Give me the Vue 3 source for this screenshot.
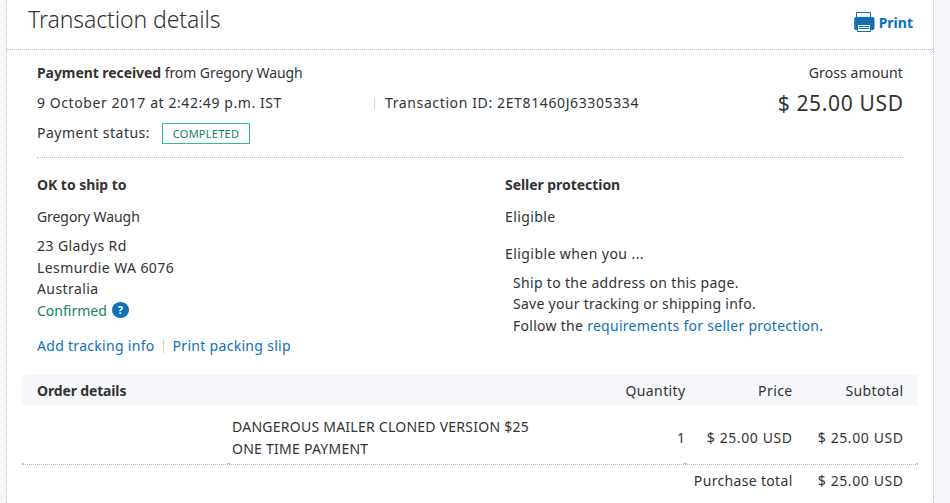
<script setup>
const address = ['23 Gladys Rd', 'Lesmurdie WA 6076', 'Australia']
const item = {
  name: ['DANGEROUS MAILER CLONED VERSION $25', 'ONE TIME PAYMENT'],
  quantity: 1,
  price: '$ 25.00 USD',
  subtotal: '$ 25.00 USD'
}
</script>

<template>
  <div class="page">
    <div class="card">
      <header class="header">
        <h1>Transaction details</h1>
        <a class="print">
          <svg width="21" height="20" viewBox="0 0 21 20">
            <path d="M2.500 5.500V0.500h14v5" fill="#fff" stroke="#0e6eb8" />
            <path d="M1.500 5h17.500l1.500 1.500v10l-1.500 1.500H1.500L0.200 16.500V6.500z" fill="#0e6eb8" />
            <path d="M3.500 12.500h13v7h-13z" fill="#fff" stroke="#0e6eb8" />
            <path d="M5 14.500h10M5 16.500h10" stroke="#0e6eb8" />
          </svg>
          <span>Print</span>
        </a>
      </header>

      <section class="summary">
        <div class="info">
          <div class="row from"><b>Payment received</b> from Gregory Waugh</div>
          <div class="row">
            <span class="date">9 October 2017 at 2:42:49 p.m. IST</span>
            <span class="bar"></span>
            <span class="txid">Transaction ID: 2ET81460J63305334</span>
          </div>
          <div class="row">
            <span class="label">Payment status:</span>
            <span class="badge">COMPLETED</span>
          </div>
        </div>
        <div class="gross">
          <div class="gross-label">Gross amount</div>
          <div class="amount">$ 25.00 USD</div>
        </div>
      </section>

      <section class="columns">
        <div class="ship">
          <h2>OK to ship to</h2>
          <p class="name">Gregory Waugh</p>
          <div class="lines address">
            <div v-for="line in address" :key="line">{{ line }}</div>
            <div class="confirmed">
              <span>Confirmed</span>
              <i class="help">?</i>
            </div>
          </div>
          <div class="links">
            <a>Add tracking info</a>
            <span class="bar"></span>
            <a>Print packing slip</a>
          </div>
        </div>
        <div class="seller">
          <h2>Seller protection</h2>
          <p class="name eligible">Eligible</p>
          <p class="when">Eligible when you ...</p>
          <div class="lines rules">
            <div>Ship to the address on this page.</div>
            <div>Save your tracking or shipping info.</div>
            <div>Follow the <a>requirements for seller protection</a>.</div>
          </div>
        </div>
      </section>

      <section class="order">
        <div class="grid head">
          <b>Order details</b>
          <span></span>
          <span class="num">Quantity</span>
          <span class="num">Price</span>
          <span class="num">Subtotal</span>
        </div>
        <div class="grid item">
          <span></span>
          <div class="desc">
            <div v-for="line in item.name" :key="line">{{ line }}</div>
          </div>
          <span class="num">{{ item.quantity }}</span>
          <span class="num">{{ item.price }}</span>
          <span class="num">{{ item.subtotal }}</span>
        </div>
        <div class="total">
          <span>Purchase total</span>
          <span class="total-value">$ 25.00 USD</span>
        </div>
      </section>
    </div>
  </div>
</template>

<style>
body {
  margin: 0;
  overflow: hidden;
}
</style>

<style scoped>
.page {
  height: 503px;
  padding: 0 16px 0 6px;
  box-sizing: border-box;
  background: #f5f7fb;
  font-family: "Noto Sans", "Open Sans", sans-serif;
  font-size: 14px;
  color: #333;
  overflow: hidden;
}
.card {
  height: 503px;
  box-sizing: border-box;
  background: #fff;
  border-left: 1px dotted #bbb;
  border-right: 1px dotted #bbb;
}
a {
  color: #0e70b8;
}
h1,
h2,
p {
  margin: 0;
}
.header {
  display: flex;
  justify-content: space-between;
  height: 49px;
  padding: 0 20px 0 21px;
  border-bottom: 1px dotted #bbb;
}
h1 {
  font-weight: 300;
  font-size: 23px;
  line-height: 39px;
  letter-spacing: -0.1px;
}
.print {
  display: flex;
  gap: 4px;
  padding-top: 12px;
  height: 20px;
  font-weight: bold;
  line-height: 21px;
}
.summary {
  display: flex;
  justify-content: space-between;
  height: 99px;
  margin: 0 30px;
  padding-top: 8px;
  border-bottom: 1px dotted #bbb;
}
.row {
  display: flex;
  align-items: center;
  height: 30px;
  line-height: 30px;
  white-space: pre;
}
.from {
  letter-spacing: -0.07px;
}
.bar {
  width: 1px;
  height: 13px;
  background: #ddd0c8;
}
.date {
  width: 337px;
  letter-spacing: 0.58px;
}
.txid {
  margin-left: 10px;
  letter-spacing: 0.62px;
}
.label {
  width: 125px;
  letter-spacing: 0.5px;
}
.badge {
  width: 86px;
  height: 19px;
  border: 1px solid #2ac28f;
  color: #138262;
  font-size: 11px;
  line-height: 20px;
  letter-spacing: 0.25px;
  text-align: center;
}
.gross {
  text-align: right;
  line-height: 30px;
}
.gross-label {
  letter-spacing: 0.1px;
}
.amount {
  margin-right: -0.65px;
  font-size: 21px;
  letter-spacing: 0.65px;
}
.columns {
  display: flex;
  height: 205px;
  padding: 12px 30px 0;
}
.ship {
  width: 468px;
}
h2 {
  font-size: 14px;
  line-height: 30px;
  letter-spacing: -0.05px;
}
.name {
  margin-top: 2px;
  line-height: 30px;
  letter-spacing: -0.08px;
}
.eligible {
  letter-spacing: 0.4px;
}
.lines {
  margin-top: 3px;
  line-height: 21.5px;
}
.address {
  letter-spacing: 0.42px;
}
.confirmed {
  display: flex;
  align-items: center;
  gap: 5px;
  color: #138262;
}
.confirmed span {
  letter-spacing: 0;
}
.help {
  width: 17px;
  height: 16px;
  margin-bottom: 1px;
  border-radius: 50%;
  background: #0e70b8;
  color: #fff;
  font-size: 11px;
  font-style: normal;
  font-weight: bold;
  line-height: 16px;
  letter-spacing: 0;
  text-align: center;
}
.links {
  display: flex;
  align-items: center;
  gap: 9px;
  margin-top: 10px;
  line-height: 30px;
  letter-spacing: 0.3px;
}
.links .bar {
  margin-left: -1px;
}
.when {
  margin-top: 7px;
  line-height: 30px;
  letter-spacing: 0.43px;
}
.rules {
  padding-left: 8px;
  letter-spacing: 0.28px;
}
.rules div:first-child {
  line-height: 21px;
  letter-spacing: 0.32px;
}
.rules div:last-child {
  line-height: 22px;
}
.order {
  margin: 0 15px;
}
.grid {
  display: grid;
  grid-template-columns: 206px 1fr 60px 107px 126px;
}
.head {
  height: 30px;
  line-height: 32px;
  background: #f5f7fb;
}
.head b {
  padding-left: 15px;
  letter-spacing: -0.15px;
}
.num {
  margin-right: -0.6px;
  text-align: right;
  white-space: nowrap;
  letter-spacing: 0.6px;
}
.head .num {
  letter-spacing: 0.4px;
}
.num:last-child {
  padding-right: 15px;
}
/* short ticks where the cell borders meet */
.item {
  height: 59px;
  align-items: center;
  border-bottom: 1px dotted #bbb;
  background:
    linear-gradient(#c4c4c4, #c4c4c4) 0 100% / 2px 1px no-repeat,
    linear-gradient(#c4c4c4, #c4c4c4) 205px 100% / 3px 1px no-repeat,
    linear-gradient(#c4c4c4, #c4c4c4) 661px 100% / 4px 1px no-repeat,
    linear-gradient(#c4c4c4, #c4c4c4) 100% 100% / 2px 1px no-repeat;
  background-origin: padding-box;
}
.desc {
  padding: 7px 0 0 4px;
  line-height: 22px;
  letter-spacing: 0.25px;
}
.item .num {
  padding-top: 5px;
}
.total {
  display: flex;
  justify-content: flex-end;
  padding-right: 14.4px;
  line-height: 31px;
  letter-spacing: 0.33px;
}
.total-value {
  width: 111px;
  text-align: right;
  letter-spacing: 0.6px;
}
</style>
